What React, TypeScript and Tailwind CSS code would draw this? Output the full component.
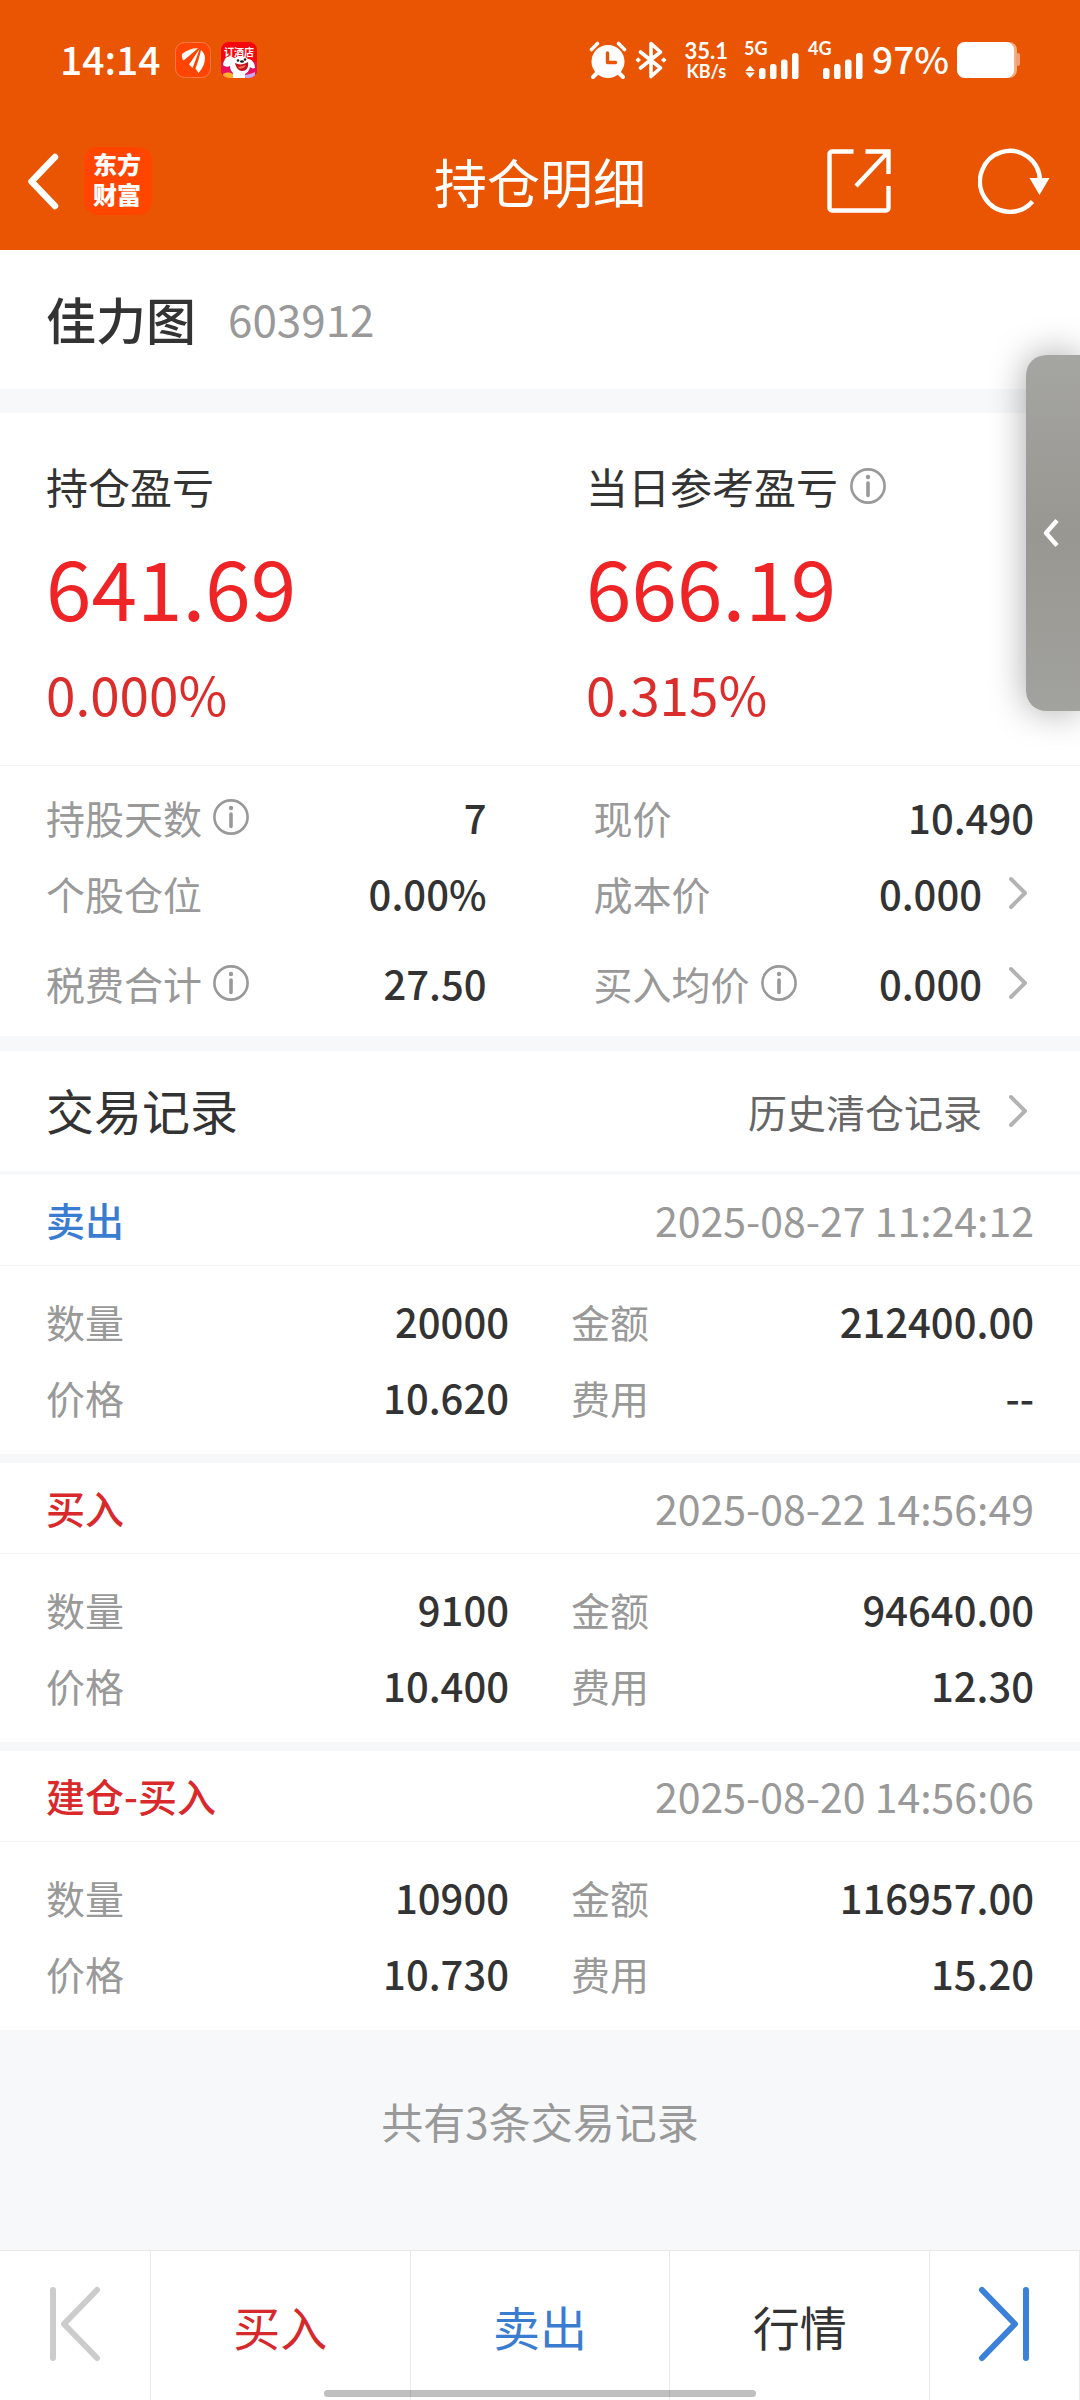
import type { ReactNode } from "react";
import { clsx } from "clsx";

interface StatItem {
    label: string;
    value: string;
    info?: boolean;
    link?: boolean;
}

interface TradeRecord {
    title: string;
    side: "buy" | "sell";
    time: string;
    quantity: string;
    amount: string;
    price: string;
    fee: string;
}

const stats: [StatItem, StatItem][] = [
    [
        { label: "持股天数", value: "7", info: true },
        { label: "现价", value: "10.490" },
    ],
    [
        { label: "个股仓位", value: "0.00%" },
        { label: "成本价", value: "0.000", link: true },
    ],
    [
        { label: "税费合计", value: "27.50", info: true },
        { label: "买入均价", value: "0.000", info: true, link: true },
    ],
];

const records: TradeRecord[] = [
    {
        title: "卖出",
        side: "sell",
        time: "2025-08-27 11:24:12",
        quantity: "20000",
        amount: "212400.00",
        price: "10.620",
        fee: "--",
    },
    {
        title: "买入",
        side: "buy",
        time: "2025-08-22 14:56:49",
        quantity: "9100",
        amount: "94640.00",
        price: "10.400",
        fee: "12.30",
    },
    {
        title: "建仓-买入",
        side: "buy",
        time: "2025-08-20 14:56:06",
        quantity: "10900",
        amount: "116957.00",
        price: "10.730",
        fee: "15.20",
    },
];

const InfoButton = ({ label }: { label: string }) => (
    <button type="button" aria-label={`${label}说明`} className="shrink-0 text-[#999999]">
        <svg width="36" height="36" viewBox="0 0 36 36" fill="none">
            <circle cx="18" cy="18" r="16.6" stroke="currentColor" strokeWidth="2.6" />
            <circle cx="18" cy="9" r="2.2" fill="currentColor" />
            <path d="M18 15v12.5" stroke="currentColor" strokeWidth="3.6" strokeLinecap="round" />
        </svg>
    </button>
);

const ChevronRight = () => (
    <svg width="20" height="34" viewBox="0 0 20 34" fill="none" className="shrink-0">
        <path d="M3 3l14 14L3 31" stroke="#b3b3b3" strokeWidth="4" strokeLinecap="round" strokeLinejoin="round" />
    </svg>
);

const AlarmIcon = () => (
    <svg width="38" height="38" viewBox="0 0 38 38" fill="none">
        <circle cx="19" cy="20.5" r="16.5" fill="#fff" />
        <path d="M2.5 8.5l6-6M35.5 8.5l-6-6" stroke="#fff" strokeWidth="3.6" strokeLinecap="round" />
        <path d="M8 32l-4 4M30 32l4 4" stroke="#fff" strokeWidth="4" strokeLinecap="round" />
        <path d="M18.500 12v9.500h8" stroke="#ea5504" strokeWidth="3.4" strokeLinecap="round" strokeLinejoin="round" />
    </svg>
);

const BluetoothIcon = () => (
    <svg width="32" height="38" viewBox="0 0 32 38" fill="none">
        <path
            d="M5.500 11l20 16-9.500 8.500v-33L25.500 11l-20 16"
            stroke="#fff"
            strokeWidth="3.6"
            strokeLinecap="round"
            strokeLinejoin="round"
        />
        <path d="M3.200 16.300L6 19l-2.800 2.700L.4 19zM28.800 16.300L31.600 19l-2.800 2.700L26 19z" fill="#fff" />
    </svg>
);

const SignalIcon = ({ network, active }: { network: string; active?: boolean }) => (
    <svg width="56" height="38" viewBox="0 0 56 38" fill="#fff" className="overflow-visible">
        <text x="0" y="14" fontSize="18" fontWeight="700" className="font-['Lato',sans-serif]">
            {network}
        </text>
        {active && <path d="M6 24.500l4.800 5.500H1.200zM6 37l4.800-5.500H1.200z" />}
        <rect x="15" y="27" width="6.500" height="11" rx="2.600" />
        <rect x="26" y="23" width="6.500" height="15" rx="2.600" />
        <rect x="37" y="18.500" width="6.500" height="19.500" rx="2.600" />
        <rect x="48" y="12" width="6.500" height="26" rx="2.600" />
    </svg>
);

const BatteryIcon = () => (
    <svg width="64" height="38" viewBox="0 0 64 38">
        <rect x="0" y="1" width="60" height="36" rx="8" fill="#f6ae85" />
        <rect x="59" y="12" width="4" height="13" rx="2" fill="#f2a078" />
        <rect x="0" y="1" width="57" height="36" rx="8" fill="#fff" />
    </svg>
);

const BrokerIcon = () => (
    <svg width="36" height="36" viewBox="0 0 36 36" fill="#fff">
        <rect x=".5" y=".5" width="35" height="35" rx="9" fill="#ff4500" stroke="#ff7a4a" />
        <path d="M7 12C12 8 18 6 23 6.300 19 10 14 14 8.500 18.500c-1.500-2-2-4-1.500-6.500z" />
        <path d="M24.500 7C21 12 18 17 14 22.500l3.500 3.500C20 19.500 22.500 13.500 24.500 7z" />
        <path d="M26 8c-1.500 6.500-3 12-5.500 18.500l3 4.500c4.500-5 6.500-10 6.500-15 0-3-1.500-6-4-8z" />
    </svg>
);

const HotelIcon = () => (
    <svg width="36" height="36" viewBox="0 0 36 36">
        <clipPath id="hotel-clip">
            <rect width="36" height="36" rx="8" />
        </clipPath>
        <g clipPath="url(#hotel-clip)">
            <rect width="36" height="36" fill="#f5070f" />
            <rect y="20" width="36" height="16" fill="#e8105c" />
            <path d="M4 17c2-3 6-3 9-1 5-2 11-2 14 1 4 0 7 4 7 9-2 1-4 0-5-1-1 4-3 6-5 7v4H12v-5c-2-2-3-4-3-7-2 1-5 1-7-1 0-2 1-4 2-6z" fill="#fff" />
            <path d="M14 21c4 2 8 2 13-1 1 6-2 9-6 9-3 0-6-3-7-8z" fill="#c3121b" />
            <path d="M17 25c3-1 5-1 8-2-1 3-6 5-8 2z" fill="#ff6a5c" />
            <circle cx="17" cy="18.500" r="1.300" fill="#222" />
            <circle cx="24" cy="17.500" r="1.300" fill="#222" />
            <ellipse cx="21" cy="19.500" rx="2" ry="1.300" fill="#222" />
            <path d="M2 32c3-2 7-2 10 0v4H2z" fill="#ffb02e" />
            <path d="M24 33c3-1 6-1 10-3v6H24z" fill="#c9a6f0" />
            <text x="3" y="14" fontSize="10" fontWeight="700" fill="#fff">
                订酒店
            </text>
        </g>
    </svg>
);

const StatusBar = () => (
    <div className="flex h-[120px] items-center justify-between pr-[59px] pl-[60px]">
        <div className="flex items-center">
            <span className="pb-1 text-[39px] leading-[56px] font-medium">14:14</span>
            <div className="ml-[14px] flex items-center gap-[10px]">
                <BrokerIcon />
                <HotelIcon />
            </div>
        </div>
        <div className="flex items-center">
            <AlarmIcon />
            <div className="ml-2">
                <BluetoothIcon />
            </div>
            <div className="ml-[18px] flex flex-col items-center font-['Lato',sans-serif] font-bold">
                <span className="text-[22px] leading-[22px]">35.1</span>
                <span className="text-[18px] leading-[18px]">KB/s</span>
            </div>
            <div className="ml-4 flex gap-2">
                <SignalIcon network="5G" active />
                <SignalIcon network="4G" />
            </div>
            <span className="ml-2 pb-1 text-[37px] leading-[56px] font-medium">97%</span>
            <div className="ml-2">
                <BatteryIcon />
            </div>
        </div>
    </div>
);

const NavBar = () => (
    <div className="grid h-[130px] grid-cols-[1fr_auto_1fr] items-center px-[30px] pb-2">
        <div className="flex items-center gap-[26px]">
            <button type="button" aria-label="返回">
                <svg width="28" height="60" viewBox="5 0 28 60" fill="none" className="overflow-visible">
                    <path d="M30 6L6.500 30.500 30 55" stroke="#fff" strokeWidth="6.500" strokeLinecap="round" strokeLinejoin="round" />
                </svg>
            </button>
            <div className="flex h-[68px] w-[68px] items-center justify-center rounded-[14px] bg-[#ff4500] pb-1">
                <span className="w-[50px] text-[24px] leading-[30px] font-black">东方财富</span>
            </div>
        </div>
        <h1 className="text-[53px] leading-[72px]">持仓明细</h1>
        <div className="flex items-center justify-end gap-[87px]">
            <button type="button" aria-label="分享">
                <svg width="64" height="64" viewBox="0 0 64 64" fill="none" stroke="#fff" strokeWidth="4.400">
                    <path d="M26.500 2.500H5a2.500 2.500 0 0 0-2.500 2.500v54A2.500 2.500 0 0 0 5 61.500h54a2.500 2.500 0 0 0 2.500-2.500V37" />
                    <path d="M38.500 2.500h23V25M61 3L29 37" />
                </svg>
            </button>
            <button type="button" aria-label="刷新">
                <svg width="72" height="66" viewBox="0 0 72 66" fill="none">
                    <path d="M54.500 53.500A30 30.500 0 1 1 62 33" stroke="#fff" strokeWidth="4.400" />
                    <path d="M51.500 30h20L61.500 47z" fill="#fff" />
                </svg>
            </button>
        </div>
    </div>
);

const ProfitCard = ({ label, value, percent, info }: { label: string; value: string; percent: string; info?: boolean }) => (
    <div className="pt-[44px] pb-[34px] pl-[46px]">
        <div className="flex items-center gap-3">
            <h2 className="text-[42px] leading-[58px]">{label}</h2>
            {info && <InfoButton label={label} />}
        </div>
        <p className="mt-[11px] text-[82px] leading-[120px] text-[#ee2427]">{value}</p>
        <p className="mt-[9px] text-[53px] leading-[76px] text-[#dc2d2d]">{percent}</p>
    </div>
);

const Field = ({ label, value, info, link }: StatItem) => {
    const valueNode: ReactNode = <span className="font-medium text-[#333333]">{value}</span>;

    return (
        <div className="flex items-center justify-between text-[40px] leading-[56px]">
            <div className="flex items-center gap-[11px]">
                <span className="text-[39px] text-[#999999]">{label}</span>
                {info && <InfoButton label={label} />}
            </div>
            {link ? (
                <button type="button" aria-label={`${label} ${value}`} className="flex items-center gap-[26px] pr-[6px]">
                    {valueNode}
                    <ChevronRight />
                </button>
            ) : (
                valueNode
            )}
        </div>
    );
};

const RecordCard = ({ record }: { record: TradeRecord }) => (
    <li className="bg-white">
        <div className="flex h-[91px] items-center justify-between border-b border-[#f4f5f6] px-[46px] pb-0.5">
            <h3
                className={clsx(
                    "text-[39px] leading-[56px] font-medium",
                    record.side === "buy" ? "text-[#d9292b]" : "text-[#3a7dd0]"
                )}
            >
                {record.title}
            </h3>
            <time className="text-[41px] leading-[56px] text-[#999999]">{record.time}</time>
        </div>
        <div className="grid grid-cols-2 gap-x-[62px] gap-y-5 px-[46px] pt-[27px] pb-[29px]">
            <Field label="数量" value={record.quantity} />
            <Field label="金额" value={record.amount} />
            <Field label="价格" value={record.price} />
            <Field label="费用" value={record.fee} />
        </div>
    </li>
);

const BottomBar = () => (
    <nav className="relative grid h-[150px] grid-cols-[151px_1fr_1fr_1fr_150px] divide-x divide-[#ebebeb] border-t border-[#e8e8e8] bg-white text-[47px] leading-[64px]">
        <button type="button" aria-label="上一只" disabled className="flex items-center justify-center pb-1">
            <svg width="52" height="76" viewBox="0 0 52 76" fill="none" stroke="#cccccc" strokeWidth="6" strokeLinecap="round" strokeLinejoin="round">
                <path d="M4 4v68M48 4L15 38l33 34" />
            </svg>
        </button>
        <button type="button" className="text-[#d5292b]">买入</button>
        <button type="button" className="text-[#3a7dd0]">卖出</button>
        <button type="button">行情</button>
        <button type="button" aria-label="下一只" className="flex items-center justify-center pb-1">
            <svg width="52" height="76" viewBox="0 0 52 76" fill="none" stroke="#3b80d9" strokeWidth="6" strokeLinecap="round" strokeLinejoin="round">
                <path d="M48 4v68M4 4l33 34L4 72" />
            </svg>
        </button>
        <div className="absolute bottom-[3px] left-[30%] h-[7px] w-[40%] rounded-full bg-black/25" />
    </nav>
);

const App = () => {
    return (
        <div className="relative flex min-h-screen flex-col overflow-hidden bg-[#f6f8fa] font-['Noto_Sans_CJK_SC','Noto_Sans',sans-serif] text-[#333333]">
            <header className="bg-[#ea5504] text-white">
                <StatusBar />
                <NavBar />
            </header>

            <main className="flex-1">
                <section className="flex h-[139px] items-center gap-[32px] bg-white px-[46px] pb-1">
                    <h2 className="text-[50px] leading-[72px] font-medium">佳力图</h2>
                    <span className="text-[44px] leading-[64px] text-[#999999]">603912</span>
                </section>

                <section className="mt-6 bg-white">
                    <div className="grid grid-cols-2 border-b border-[#f4f5f6]">
                        <ProfitCard label="持仓盈亏" value="641.69" percent="0.000%" />
                        <ProfitCard label="当日参考盈亏" value="666.19" percent="0.315%" info />
                    </div>
                    <div className="grid grid-cols-2 gap-x-[107px] px-[46px] pt-[23px] pb-[25px]">
                        {stats.map(([left, right], index) => (
                            <div
                                key={left.label}
                                className={clsx(
                                    "col-span-2 grid grid-cols-subgrid",
                                    index === 1 && "mt-5",
                                    index === 2 && "mt-[34px]"
                                )}
                            >
                                <Field {...left} />
                                <Field {...right} />
                            </div>
                        ))}
                    </div>
                </section>

                <section className="mt-[15px]">
                    <div className="flex h-[120px] items-center justify-between bg-white px-[46px]">
                        <h2 className="pb-1 text-[48px] leading-[68px]">交易记录</h2>
                        <a href="#history" className="flex items-center gap-[26px] pr-[6px] text-[39px] leading-[56px] text-[#666666]">
                            历史清仓记录
                            <ChevronRight />
                        </a>
                    </div>
                    <ul className="mt-1 space-y-[9px]">
                        {records.map((record) => (
                            <RecordCard key={record.time} record={record} />
                        ))}
                    </ul>
                    <p className="pt-[62px] pb-10 text-center text-[42px] leading-[58px] text-[#999999]">
                        共有{records.length}条交易记录
                    </p>
                </section>
            </main>

            <BottomBar />

            <button
                type="button"
                aria-label="展开侧边栏"
                className="absolute top-[355px] right-0 flex h-[356px] w-[54px] items-center justify-center rounded-l-[20px] bg-linear-to-b from-[#a5a5a2] via-[#989791] to-[#a2a29e] pr-1 shadow-[0_0_36px_rgba(0,0,0,0.35)]"
            >
                <svg width="18" height="32" viewBox="0 0 18 32" fill="none">
                    <path d="M15 3.500L4 16l11 12.500" stroke="#fff" strokeWidth="4.400" strokeLinejoin="round" />
                </svg>
            </button>
        </div>
    );
};

export default App;
